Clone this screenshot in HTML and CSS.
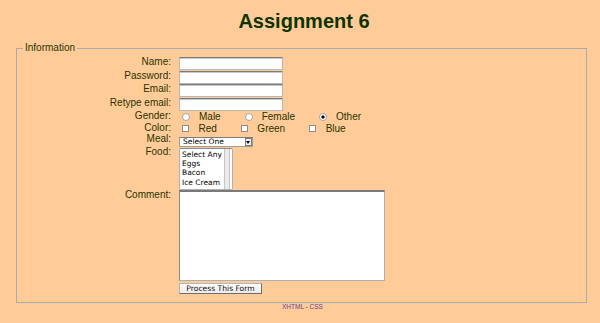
FILE: index.html
```html
<!DOCTYPE html>
<html>
<head>
    <meta charset="utf-8" />
    <title>Assignment 6</title>
    <link rel="stylesheet" href="styles.css">
</head>
<body>
    <h1 class="title">Assignment 6</h1>
    <form class="info-form" action="#">
        <fieldset class="info">
            <legend>Information</legend>
            <div class="grid">
                <label class="lbl" for="name">Name:</label>
                <input class="text" id="name" type="text" />

                <label class="lbl" for="password">Password:</label>
                <input class="text" id="password" type="password" />

                <label class="lbl" for="email">Email:</label>
                <input class="text" id="email" type="text" />

                <label class="lbl" for="email2">Retype email:</label>
                <input class="text" id="email2" type="text" />

                <span class="lbl">Gender:</span>
                <div class="choices">
                    <label class="choice"><input type="radio" name="gender" value="male" />Male</label>
                    <label class="choice"><input type="radio" name="gender" value="female" />Female</label>
                    <label class="choice"><input type="radio" name="gender" value="other" checked />Other</label>
                </div>

                <span class="lbl">Color:</span>
                <div class="choices">
                    <label class="choice"><input type="checkbox" name="color" value="red" />Red</label>
                    <label class="choice"><input type="checkbox" name="color" value="green" />Green</label>
                    <label class="choice"><input type="checkbox" name="color" value="blue" />Blue</label>
                </div>

                <label class="lbl lbl-meal" for="meal">Meal:</label>
                <span class="meal-wrap">
                    <select class="meal" id="meal">
                        <option>Select One</option>
                        <option>Breakfast</option>
                        <option>Lunch</option>
                        <option>Dinner</option>
                    </select>
                </span>

                <label class="lbl" for="food">Food:</label>
                <select class="food" id="food" multiple size="4">
                    <option>Select Any</option>
                    <option>Eggs</option>
                    <option>Bacon</option>
                    <option>Ice Cream</option>
                </select>

                <label class="lbl" for="comment">Comment:</label>
                <textarea class="comment" id="comment"></textarea>

                <span></span>
                <div><button class="submit" type="button">Process This Form</button></div>
            </div>
        </fieldset>
    </form>
    <p class="footer"><a href="#">XHTML</a> - <a href="#">CSS</a></p>
</body>
</html>
```

FILE: styles.css
```css
body
{
    margin: 0;
    background: #ffcc99;
    font-family: "Liberation Sans", Arial, sans-serif;
    color: #283300;
}

.title
{
    margin: 0;
    padding: 9px 0 0 8px;
    height: 24px;
    line-height: 24px;
    font-size: 20px;
    text-align: center;
    color: #0d3300;
}

.info
{
    margin: 9px 13px 0 16px;
    padding: 3px 0 7.5px;
    border: 1px solid #ababab;
    min-width: 0;
}

.info legend
{
    margin-left: 6px;
    padding: 0 2px;
    font-size: 10px;
    line-height: 12px;
}

.grid
{
    display: grid;
    grid-template-columns: 154px 1fr;
    column-gap: 8px;
    align-items: start;
}

.lbl
{
    text-align: right;
    font-size: 10px;
    line-height: 10px;
}

.text
{
    display: block;
    box-sizing: border-box;
    width: 104px;
    height: 13px;
    margin: 0 0 0.5px;
    padding: 0 2px;
    border: 1px solid #b8b8b8;
    border-top: 1px solid #7c7c7c;
    box-shadow: inset 0 1px #c8c8c8;
    background: #fff;
    font-size: 8px;
}

.choices
{
    display: flex;
    align-items: center;
    height: 11.5px;
    font-size: 10px;
}

.choice
{
    display: flex;
    align-items: center;
    margin-right: 21px;
}

.choice input
{
    appearance: none;
    -webkit-appearance: none;
    box-sizing: border-box;
    margin: 0 9px 0 3px;
    width: 8px;
    height: 8px;
    border: 1px solid #a4a4a4;
    border-radius: 50%;
    background: #fff;
}

.choice input:checked
{
    background: radial-gradient(circle, #000 0 1.3px, #fff 1.9px);
}

.choice input[type="checkbox"]
{
    width: 7px;
    height: 7px;
    margin-right: 9.5px;
    border-radius: 0;
    border-color: #8c8c8c;
}

.meal-wrap
{
    position: relative;
    display: block;
    width: 74px;
    height: 10.5px;
    margin-top: 2.5px;
}

.meal
{
    appearance: none;
    -webkit-appearance: none;
    box-sizing: border-box;
    display: block;
    width: 100%;
    height: 100%;
    margin: 0;
    padding: 0 0 0 3px;
    border: 1px solid #9c9c9c;
    border-top-color: #7c7c7c;
    border-radius: 0;
    background: #fff;
    color: #000;
    font-family: "DejaVu Sans", Verdana, sans-serif;
    font-size: 7.5px;
    line-height: 8px;
}

/* little arrow box on the right of the dropdown */
.meal-wrap::before
{
    content: "";
    position: absolute;
    right: 1.5px;
    top: 1.5px;
    width: 5px;
    height: 6px;
    border: 1px solid #7a7a7a;
    background: #f4f4f4;
}

.meal-wrap::after
{
    content: "";
    position: absolute;
    right: 3px;
    top: 4.5px;
    border-top: 3px solid #000;
    border-left: 2px solid transparent;
    border-right: 2px solid transparent;
}

.food
{
    box-sizing: border-box;
    width: 54px;
    height: 42px;
    margin: 0.5px 0 0;
    padding: 1px 0 0 2px;
    border: 1px solid #b0b0b0;
    border-top-color: #8a8a8a;
    overflow: hidden;
    scrollbar-width: none;
    background: linear-gradient(to left, #fff 0 2px, #c4c4c4 2px 3px, #ececec 3px 7px, #c4c4c4 7px 8px, #fff 8px);
    color: #000;
    font-family: "DejaVu Sans", Verdana, sans-serif;
    font-size: 7.5px;
}

.food option
{
    padding: 0;
    height: 9.4px;
    line-height: 9.4px;
    background: transparent;
}

.comment
{
    display: block;
    box-sizing: border-box;
    width: 206px;
    height: 91px;
    margin: 0;
    padding: 2px;
    border: 1px solid #b0b0b0;
    border-top: 2px solid #7a7a7a;
    border-left-color: #8a8a8a;
    background: #fff;
    resize: none;
}

.submit
{
    box-sizing: border-box;
    display: block;
    width: 83px;
    height: 11.5px;
    margin-top: 2px;
    padding: 0;
    border: 1px solid #b4b4b4;
    border-right-color: #6e6e6e;
    border-bottom-color: #6e6e6e;
    border-radius: 0;
    background: linear-gradient(#fefefe, #ebebeb);
    color: #111;
    font-family: "DejaVu Sans", Verdana, sans-serif;
    font-size: 7.6px;
    line-height: 9px;
}

.footer
{
    margin: 0;
    padding-left: 5px;
    font-size: 6.5px;
    line-height: 7px;
    text-align: center;
    color: #444;
}

.footer a
{
    color: #6b3f8f;
    text-decoration: underline;
    text-decoration-thickness: 1px;
    text-underline-offset: 1px;
}
```
